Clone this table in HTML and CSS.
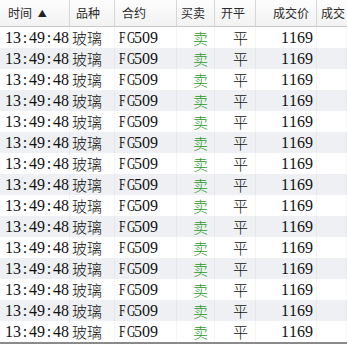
FILE: index.html
```html
<!DOCTYPE html>
<html>
<head>
<meta charset="utf-8">
<link rel="stylesheet" href="styles.css">
</head>
<body>
<div class="grid">
  <div class="hd c-time">时间 <span class="arrow">▲</span></div>
  <div class="hd c-var">品种</div>
  <div class="hd c-con">合约</div>
  <div class="hd c-bs">买卖</div>
  <div class="hd c-oc">开平</div>
  <div class="hd c-px">成交价</div>
  <div class="hd c-more">成交</div>
</div>
<div id="rows"></div>
<div class="scroll"></div>
<script>
  function mono(s) {
    var out = '';
    for (var k = 0; k < s.length; k++) {
      var c = s[k];
      var cls = /[A-Z]/.test(c) ? 'ch up' : 'ch';
      out += '<span class="' + cls + '">' + c + '</span>';
    }
    return out;
  }
  var html = '';
  for (var i = 0; i < 15; i++) {
    html += '<div class="grid row ' + (i % 2 ? 'alt' : '') + '">' +
      '<div class="cell c-time num">' + mono('13:49:48') + '</div>' +
      '<div class="cell c-var cjk">玻璃</div>' +
      '<div class="cell c-con num">' + mono('FG509') + '</div>' +
      '<div class="cell c-bs cjk sell">卖</div>' +
      '<div class="cell c-oc cjk">平</div>' +
      '<div class="cell c-px num">' + mono('1169') + '</div>' +
      '<div class="cell c-more"></div>' +
      '</div>';
  }
  document.getElementById('rows').innerHTML = html;
</script>
</body>
</html>
```

FILE: styles.css
```css
html, body {
  margin: 0;
  padding: 0;
  background: #ffffff;
  overflow: hidden;
  width: 347px;
  height: 344px;
}

.grid {
  display: grid;
  grid-template-columns: 70px 45px 62px 38px 41px 61px 30px;
  width: 347px;
}

.hd {
  height: 26px;
  border-bottom: 1px solid #c9c9c9;
  border-right: 1px solid #d6d6d6;
  box-sizing: content-box;
  background: linear-gradient(#fdfdfd, #f2f2f2);
  font-family: "Noto Sans CJK SC", sans-serif;
  font-size: 12px;
  color: #2a2a2a;
  line-height: 26px;
  white-space: nowrap;
  overflow: hidden;
}

.hd.c-time { padding-left: 8px; width: 61px; }
.hd.c-var { padding-left: 6px; width: 38px; }
.hd.c-con { padding-left: 7px; width: 54px; }
.hd.c-bs { padding-left: 4px; width: 33px; }
.hd.c-oc { padding-left: 6px; width: 34px; }
.hd.c-px { text-align: right; padding-right: 7px; width: 53px; }
.hd.c-more { padding-left: 4px; border-right: none; }

.arrow {
  font-size: 9px;
  margin-left: 3px;
  color: #222;
  position: relative;
  top: -1px;
}

.row {
  height: 21px;
  background: #ffffff;
}

.row.alt {
  background: #eef0f3;
}

.cell {
  line-height: 21px;
  height: 21px;
  white-space: nowrap;
  overflow: hidden;
  color: #111;
  border-right: 1px solid rgba(0, 0, 0, 0.035);
  box-sizing: border-box;
}

.num {
  font-family: "Liberation Serif", serif;
  font-size: 16px;
}

.ch {
  display: inline-block;
  width: 8px;
  text-align: center;
}

.ch.up {
  transform: scaleX(0.72);
}

.cjk {
  font-family: "Noto Sans CJK SC", sans-serif;
  font-size: 15px;
  font-weight: 300;
}

.cell.c-time { padding-left: 5px; }
.cell.c-var { padding-left: 2px; }
.cell.c-con { padding-left: 3px; }
.cell.c-bs { padding-left: 16px; }
.cell.c-oc { padding-left: 18px; }
.cell.c-px { text-align: right; padding-right: 3px; }

.sell {
  color: #2a9a2a;
}

.scroll {
  height: 2px;
  background: #8a8a8a;
}
```
